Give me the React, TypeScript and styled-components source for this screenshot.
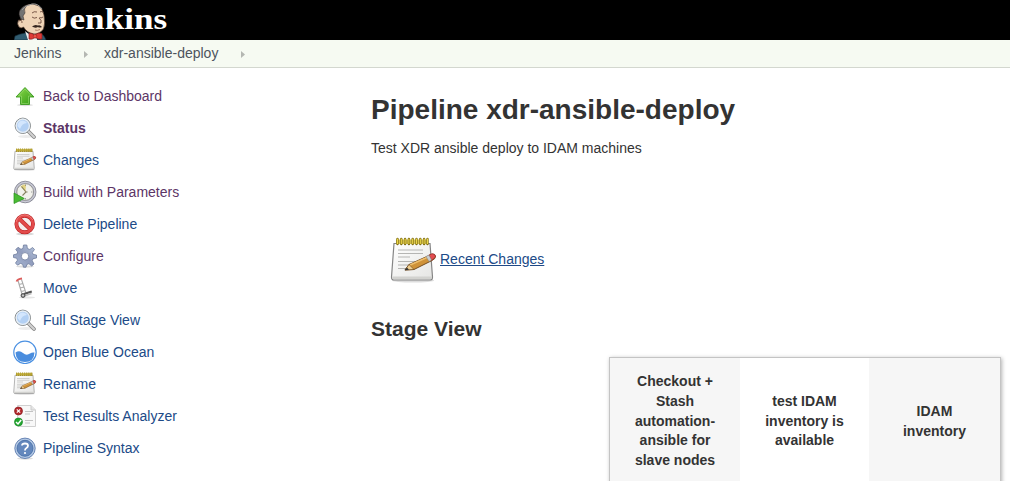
import React from "react";
import styled, { createGlobalStyle } from "styled-components";

const GlobalStyle = createGlobalStyle`
  * { box-sizing: border-box; }
  body {
    margin: 0;
    overflow: hidden;
    background: #fff;
    color: #333;
    font: 14px/20px "Liberation Sans", Helvetica, Arial, sans-serif;
  }
`;

const Page = styled.div`
  display: flex;
  flex-direction: column;
  width: 1010px;
  height: 481px;
  overflow: hidden;
`;

const Header = styled.header`
  display: flex;
  flex: none;
  height: 40px;
  padding-left: 14px;
  background: #000;
`;

const Wordmark = styled.span`
  margin-left: 4px;
  color: #fff;
  font: bold 29px/38px "Liberation Serif", Georgia, serif;
  transform: scaleX(1.21);
  transform-origin: 0 0;
`;

const Breadcrumbs = styled.nav`
  display: flex;
  flex: none;
  align-items: center;
  height: 28px;
  padding: 0 14px 1px;
  background: #f6faf2;
  border-bottom: 1px solid #d3d7cf;
  color: #4d545d;
`;

const Crumb = styled.span<{ $width: number }>`
  width: ${(p) => p.$width}px;
  white-space: nowrap;
`;

const Arrow = styled.svg`
  width: 4px;
  height: 7px;
  margin: 3px 16px 0 0;
`;

const Body = styled.div`
  display: flex;
  flex: 1;
  min-height: 0;
`;

const Side = styled.aside`
  width: 371px;
  flex: none;
  padding: 12px 0 0 13px;
`;

const Task = styled.a<{ $visited?: boolean; $bold?: boolean }>`
  display: flex;
  align-items: center;
  gap: 6px;
  height: 32px;
  color: ${(p) => (p.$visited ? "#5c3566" : "#204a87")};
  font-weight: ${(p) => (p.$bold ? "bold" : "normal")};
  svg { width: 24px; height: 24px; flex: none; }
`;

const Main = styled.main`
  flex: 1;
  min-width: 0;
  padding-top: 25px;
`;

const Title = styled.h1`
  margin: 0;
  font-size: 28px;
  line-height: 34px;
  letter-spacing: 0;
`;

const Description = styled.p`
  margin: 11px 0 0;
`;

const ChangesRow = styled.div`
  display: flex;
  align-items: center;
  gap: 2px;
  height: 48px;
  margin: 79px 0 0 19px;
  svg { width: 48px; height: 48px; }
`;

const ChangesLink = styled.a`
  color: #204a87;
  text-decoration: underline;
  margin-bottom: 5px;
`;

const Subtitle = styled.h2`
  margin: 31px 0 15px;
  font-size: 21px;
  line-height: 26px;
`;

const Stages = styled.div`
  display: grid;
  grid-template-columns: 130px 129px 131px;
  width: 392px;
  height: 160px;
  margin-left: 238px;
  border: 1px solid #c4c4c4;
  box-shadow: 1px 1px 4px rgba(0, 0, 0, 0.3);
`;

const Stage = styled.div<{ $shaded?: boolean }>`
  display: flex;
  align-items: center;
  justify-content: center;
  height: 127px;
  padding: 0 20px;
  background: ${(p) => (p.$shaded ? "#f6f6f6" : "#fff")};
  font-weight: bold;
  line-height: 19.7px;
  text-align: center;
  white-space: pre-line;
`;

const Butler = () => (
  <svg width="34" height="40" viewBox="0 0 34 40">
    <path d="M0 40L1 36Q5 34 11 33L25 33Q30 34 32 40Z" fill="#315c70" stroke="#122a35" strokeWidth=".6" />
    <path d="M11 31L17 36 23 32 23 40H14Z" fill="#eee" />
    <path d="M7.500 20Q5 15 7 11Q9 6 13 5Q19 2.500 25 6Q29 9 30 15Q31.500 24 29.500 29Q26 34 20 34Q13 33 9.500 27Q7 29 5 27Q2.500 24 4.500 20Z" fill="#efd4b7" stroke="#4a3328" strokeWidth=".7" />
    <path d="M7 19Q4 14 5.500 11Q8 6 13 5Q9 9 11 13L9 16 10 20Z" fill="#737373" stroke="#29211e" strokeWidth=".5" />
    <path d="M8 10Q11 5 18 4Q24 3 28 9" fill="none" stroke="#999" strokeWidth="1" />
    <path d="M5 21Q8 19 8 23M18 13Q20 11 23 12M26 12Q27 11 29 12M18 17Q20 19 23 17.500M25.500 17.500Q27 18.500 29 17M25 18Q28 20 27 23L24 23" fill="none" stroke="#5b392c" strokeWidth=".8" />
    <path d="M18 26.500Q21 24 24 25.500Q26 24.500 28 27Q25.500 28 24 27Q21 28.500 18 26.500Z" fill="#352620" />
    <path d="M21 30Q23 31 26 29.500" fill="none" stroke="#9c6c53" strokeWidth=".8" />
    <path d="M15 33Q18 33 20.500 35Q24 32 28 33.500L28 39Q25 40 21 37.500Q18 40 15 39Z" fill="#df3a37" stroke="#861e1d" strokeWidth=".7" />
    <circle cx="21" cy="36.200" r="1.800" fill="#ef5144" stroke="#861e1d" strokeWidth=".5" />
  </svg>
);

const UpIcon = () => (
  <svg viewBox="0 0 24 24">
    <defs><linearGradient id="up" x2="1" y2="1"><stop stopColor="#8fdb4e" /><stop offset="1" stopColor="#2f9912" /></linearGradient></defs>
    <ellipse cx="12" cy="21" rx="8" ry="1.200" fill="#ddd" />
    <path d="M12 3.500L21 13H16.500V20.500H7.500V13H3Z" fill="url(#up)" stroke="#3c9b20" strokeWidth=".9" />
    <path d="M12 5L18.500 12H15.500V19.500H8.500V12H5.500Z" fill="none" stroke="#a5e27e" strokeWidth=".5" />
  </svg>
);

const SearchIcon = () => (
  <svg viewBox="0 0 24 24">
    <ellipse cx="13" cy="20.500" rx="8" ry="1.500" fill="#ececec" />
    <path d="M15.500 15.500L21 21" stroke="#858585" strokeWidth="3.800" strokeLinecap="round" />
    <path d="M15.500 15.500L21 21" stroke="#d0d0d0" strokeWidth="2.200" strokeLinecap="round" />
    <circle cx="9.800" cy="9.800" r="7.700" fill="#b3d0f3" stroke="#8c8f8d" strokeWidth="1" />
    <circle cx="9.800" cy="9.800" r="6.600" fill="none" stroke="#e8eef4" strokeWidth="1.200" />
    <path d="M4.500 10Q5 4.500 10 4.500Q13 5 14 7Q9 7 7 13Z" fill="#d3e6fd" />
  </svg>
);

const NotepadIcon = () => (
  <svg viewBox="0 0 48 48">
    <defs><linearGradient id="paper" x2="1" y2="1"><stop stopColor="#fff" /><stop offset="1" stopColor="#e5e5e3" /></linearGradient></defs>
    <ellipse cx="23" cy="43.500" rx="21" ry="2" fill="#ddd" />
    <path d="M4 6.500H40L42.500 40Q42.500 43 40.500 43H3.500Q1.500 43 1.500 40Z" fill="url(#paper)" stroke="#858585" strokeWidth="1.200" />
    <path d="M2.500 39.500H41.500V42H2.500Z" fill="#d2d2cf" />
    <path d="M8 13H33M8 16.500H33M8 20H20M8 24.500H32M8 28H28M8 31.500H17" stroke="#b5b5b3" strokeWidth="1.200" />
    <path d="M6 2.500H38V7H6Z" fill="#d8c453" />
    <path d="M7.500 2V7M11.300 2V7M15.100 2V7M18.900 2V7M22.700 2V7M26.500 2V7M30.300 2V7M34.100 2V7M37.500 2V7" stroke="#7f6d13" strokeWidth="2.400" strokeLinecap="round" />
    <path d="M7.500 2V6.500M11.300 2V6.500M15.100 2V6.500M18.900 2V6.500M22.700 2V6.500M26.500 2V6.500M30.300 2V6.500M34.100 2V6.500M37.500 2V6.500" stroke="#e9d447" strokeWidth="1.200" strokeLinecap="round" />
    <path d="M15 33L19 27.500 39 18.500Q44 15.500 45.500 19Q46 21.500 42 23.500L24 32.500Z" fill="#cf9238" stroke="#684116" strokeWidth=".9" />
    <path d="M20 28L38 20" stroke="#edbe6d" strokeWidth="1.500" />
    <path d="M39 18L42 16.700Q45.500 16.500 45.500 20L41.500 23.500Z" fill="#e34d51" stroke="#942c2b" strokeWidth=".7" />
    <path d="M36 19.500L39 18 41.500 23 39 24.500Z" fill="#c9cdcf" stroke="#777" strokeWidth=".4" />
    <path d="M15 33L19 27.500 24 32.500Z" fill="#efcf91" stroke="#684116" strokeWidth=".6" />
    <path d="M14.500 33.200L17 30.500 19 32.800Z" fill="#333" />
  </svg>
);

const ClockIcon = () => (
  <svg viewBox="0 0 24 24">
    <circle cx="12.200" cy="12" r="10.800" fill="#b8b9c6" stroke="#7f808c" strokeWidth=".8" />
    <circle cx="12.200" cy="12" r="9.700" fill="none" stroke="#d0d1dc" strokeWidth=".8" />
    <circle cx="12.200" cy="12" r="8.400" fill="#f1f1eb" stroke="#777" strokeWidth=".7" />
    <path d="M12.500 12L7.500 6.500Q10 4 13 4.500Z" fill="#e3d382" />
    <path d="M8.500 6.500L13 12 9.500 15.500M13 12L14.500 12" fill="none" stroke="#85805f" strokeWidth="1.100" />
    <path d="M12.500 4.500V6M19.500 12H18M12.500 19.500V18" stroke="#888" strokeWidth=".8" />
    <path d="M1 13L11.300 18.500 1 23.500Z" fill="#4abb34" stroke="#25901a" strokeWidth=".7" />
  </svg>
);

const StopIcon = () => (
  <svg viewBox="0 0 24 24">
    <ellipse cx="12" cy="22" rx="9" ry="1.300" fill="#d8d8d8" />
    <circle cx="11.700" cy="12" r="8.300" fill="#f5eded" stroke="#b92325" strokeWidth="3.900" />
    <path d="M6 6.500L17.500 17.500" stroke="#bd2728" strokeWidth="3.900" />
    <circle cx="11.700" cy="12" r="8.300" fill="none" stroke="#e34b4b" strokeWidth="2.800" />
    <path d="M6 6.500L17.500 17.500" stroke="#e34b4b" strokeWidth="2.800" />
    <path d="M3 10Q5 3 12 2.800Q17 3 20 8" fill="none" stroke="#f3918c" strokeWidth=".7" />
  </svg>
);

const GearIcon = () => (
  <svg viewBox="0 0 24 24">
    <defs><linearGradient id="gear" x1="1" x2="0" y2="1"><stop stopColor="#b9c8df" /><stop offset=".5" stopColor="#919dbd" /><stop offset="1" stopColor="#a9b9d5" /></linearGradient></defs>
    <ellipse cx="12" cy="22.500" rx="9" ry="1.200" fill="#ddd" />
    <path fillRule="evenodd" d="M10.500 1H13.800L14.400 4.500 16.800 5.500 19.600 3.500 21.500 5.500 19.300 8.500 20.200 10.500 23.500 11V14L20 14.700 19.200 16.700 21 20 18.700 22 15.900 19.700 13.800 20.500 13 23.200H10.500L9.700 20.300 7.500 19.400 4.500 21.200 2.500 19 4.500 16.200 3.700 14.200 .5 13.500V10.800L3.900 10 4.700 8 2.800 5.500 5 3.300 8 5.300 10 4.400ZM12 8.600A3.700 3.700 0 1 0 12 16A3.700 3.700 0 1 0 12 8.600Z" fill="url(#gear)" stroke="#6f7c9d" strokeWidth=".8" />
  </svg>
);

const MoveIcon = () => (
  <svg viewBox="0 0 24 24">
    <ellipse cx="14" cy="21.500" rx="8" ry="1" fill="#e5e5e5" />
    <path d="M5 4.500L9.500 20M8.500 3.500L13 17M6 8.500L10 7.500M7 12L11 11M8 15.500L12.500 14.500" fill="none" stroke="#aaa" strokeWidth="1.100" />
    <path d="M11 18L18.800 15.500" stroke="#555" strokeWidth="2.200" />
    <path d="M11 20L18.500 17.500" stroke="#bbb" strokeWidth="1.500" />
    <path d="M3.500 5.500Q4.500 3 9 2.500" fill="none" stroke="#dc5d5b" strokeWidth="1.800" />
    <circle cx="10" cy="19.500" r="2" fill="#777" stroke="#444" strokeWidth=".8" />
    <circle cx="10" cy="19.500" r=".9" fill="#ddd" />
  </svg>
);

const OceanIcon = () => (
  <svg viewBox="0 0 24 24">
    <circle cx="12" cy="12.300" r="11.200" fill="#fff" stroke="#4a90e2" strokeWidth="1.200" />
    <path d="M2.500 12.500Q6.500 10 10 13Q13.500 16 17 13.500Q19 12 21.500 12.500Q21 22 12 22Q3 22 2.500 12.500Z" fill="#4a8dde" />
  </svg>
);

const ResultsIcon = () => (
  <svg viewBox="0 0 24 24">
    <path d="M4.500 1.500H18L22.500 6V22.500H4.500Z" fill="#f8f8f8" stroke="#d0d0d0" />
    <path d="M18 1.500V6H22.500" fill="#e5e5e5" stroke="#ccc" />
    <path d="M12 7.500H20M12 10H17M12 16.500H20M12 19H17" stroke="#b5b5b5" strokeWidth=".8" />
    <circle cx="5.500" cy="7" r="4" fill="#b5282c" stroke="#891d20" strokeWidth=".7" />
    <path d="M3.800 5.300L7.200 8.700M7.200 5.300L3.800 8.700" stroke="#fff" strokeWidth="1.200" />
    <circle cx="5.500" cy="18" r="4" fill="#23a831" stroke="#168523" strokeWidth=".7" />
    <path d="M3 18L5 20 8.200 16" fill="none" stroke="#fff" strokeWidth="1.500" />
  </svg>
);

const HelpIcon = () => (
  <svg viewBox="0 0 24 24">
    <ellipse cx="12" cy="22.500" rx="8" ry="1.200" fill="#ddd" />
    <circle cx="12" cy="12.300" r="10.200" fill="#b4c9e5" stroke="#5b7bae" strokeWidth=".9" />
    <circle cx="12" cy="12.300" r="8" fill="#6488bd" stroke="#426ba4" strokeWidth=".8" />
    <path d="M9 9.500Q9.200 7.500 12 7.500Q15 7.500 15 9.800Q15 11.300 13.200 12.200Q12 12.900 12 14.500" fill="none" stroke="#fff" strokeWidth="1.800" />
    <circle cx="12" cy="17" r="1.100" fill="#fff" />
  </svg>
);

const CrumbArrow = () => (
  <Arrow viewBox="0 0 4 7"><path d="M0 0L4 3.500 0 7Z" fill="#b4b7b2" /></Arrow>
);

const tasks = [
  { label: "Back to Dashboard", Icon: UpIcon, visited: true },
  { label: "Status", Icon: SearchIcon, visited: true, bold: true },
  { label: "Changes", Icon: NotepadIcon },
  { label: "Build with Parameters", Icon: ClockIcon, visited: true },
  { label: "Delete Pipeline", Icon: StopIcon },
  { label: "Configure", Icon: GearIcon, visited: true },
  { label: "Move", Icon: MoveIcon },
  { label: "Full Stage View", Icon: SearchIcon },
  { label: "Open Blue Ocean", Icon: OceanIcon },
  { label: "Rename", Icon: NotepadIcon },
  { label: "Test Results Analyzer", Icon: ResultsIcon },
  { label: "Pipeline Syntax", Icon: HelpIcon },
];

export default function App() {
  return (
    <Page>
      <GlobalStyle />
      <Header>
        <Butler />
        <Wordmark>Jenkins</Wordmark>
      </Header>
      <Breadcrumbs>
        <Crumb $width={70}>Jenkins</Crumb>
        <CrumbArrow />
        <Crumb $width={137}>xdr-ansible-deploy</Crumb>
        <CrumbArrow />
      </Breadcrumbs>
      <Body>
        <Side>
          {tasks.map(({ label, Icon, visited, bold }) => (
            <Task key={label} $visited={visited} $bold={bold}>
              <Icon />
              {label}
            </Task>
          ))}
        </Side>
        <Main>
          <Title>Pipeline xdr-ansible-deploy</Title>
          <Description>Test XDR ansible deploy to IDAM machines</Description>
          <ChangesRow>
            <NotepadIcon />
            <ChangesLink>Recent Changes</ChangesLink>
          </ChangesRow>
          <Subtitle>Stage View</Subtitle>
          <Stages>
            <Stage $shaded>{"Checkout +\nStash\nautomation-\nansible for\nslave nodes"}</Stage>
            <Stage>{"test IDAM\ninventory is\navailable"}</Stage>
            <Stage $shaded>{"IDAM\ninventory"}</Stage>
          </Stages>
        </Main>
      </Body>
    </Page>
  );
}
